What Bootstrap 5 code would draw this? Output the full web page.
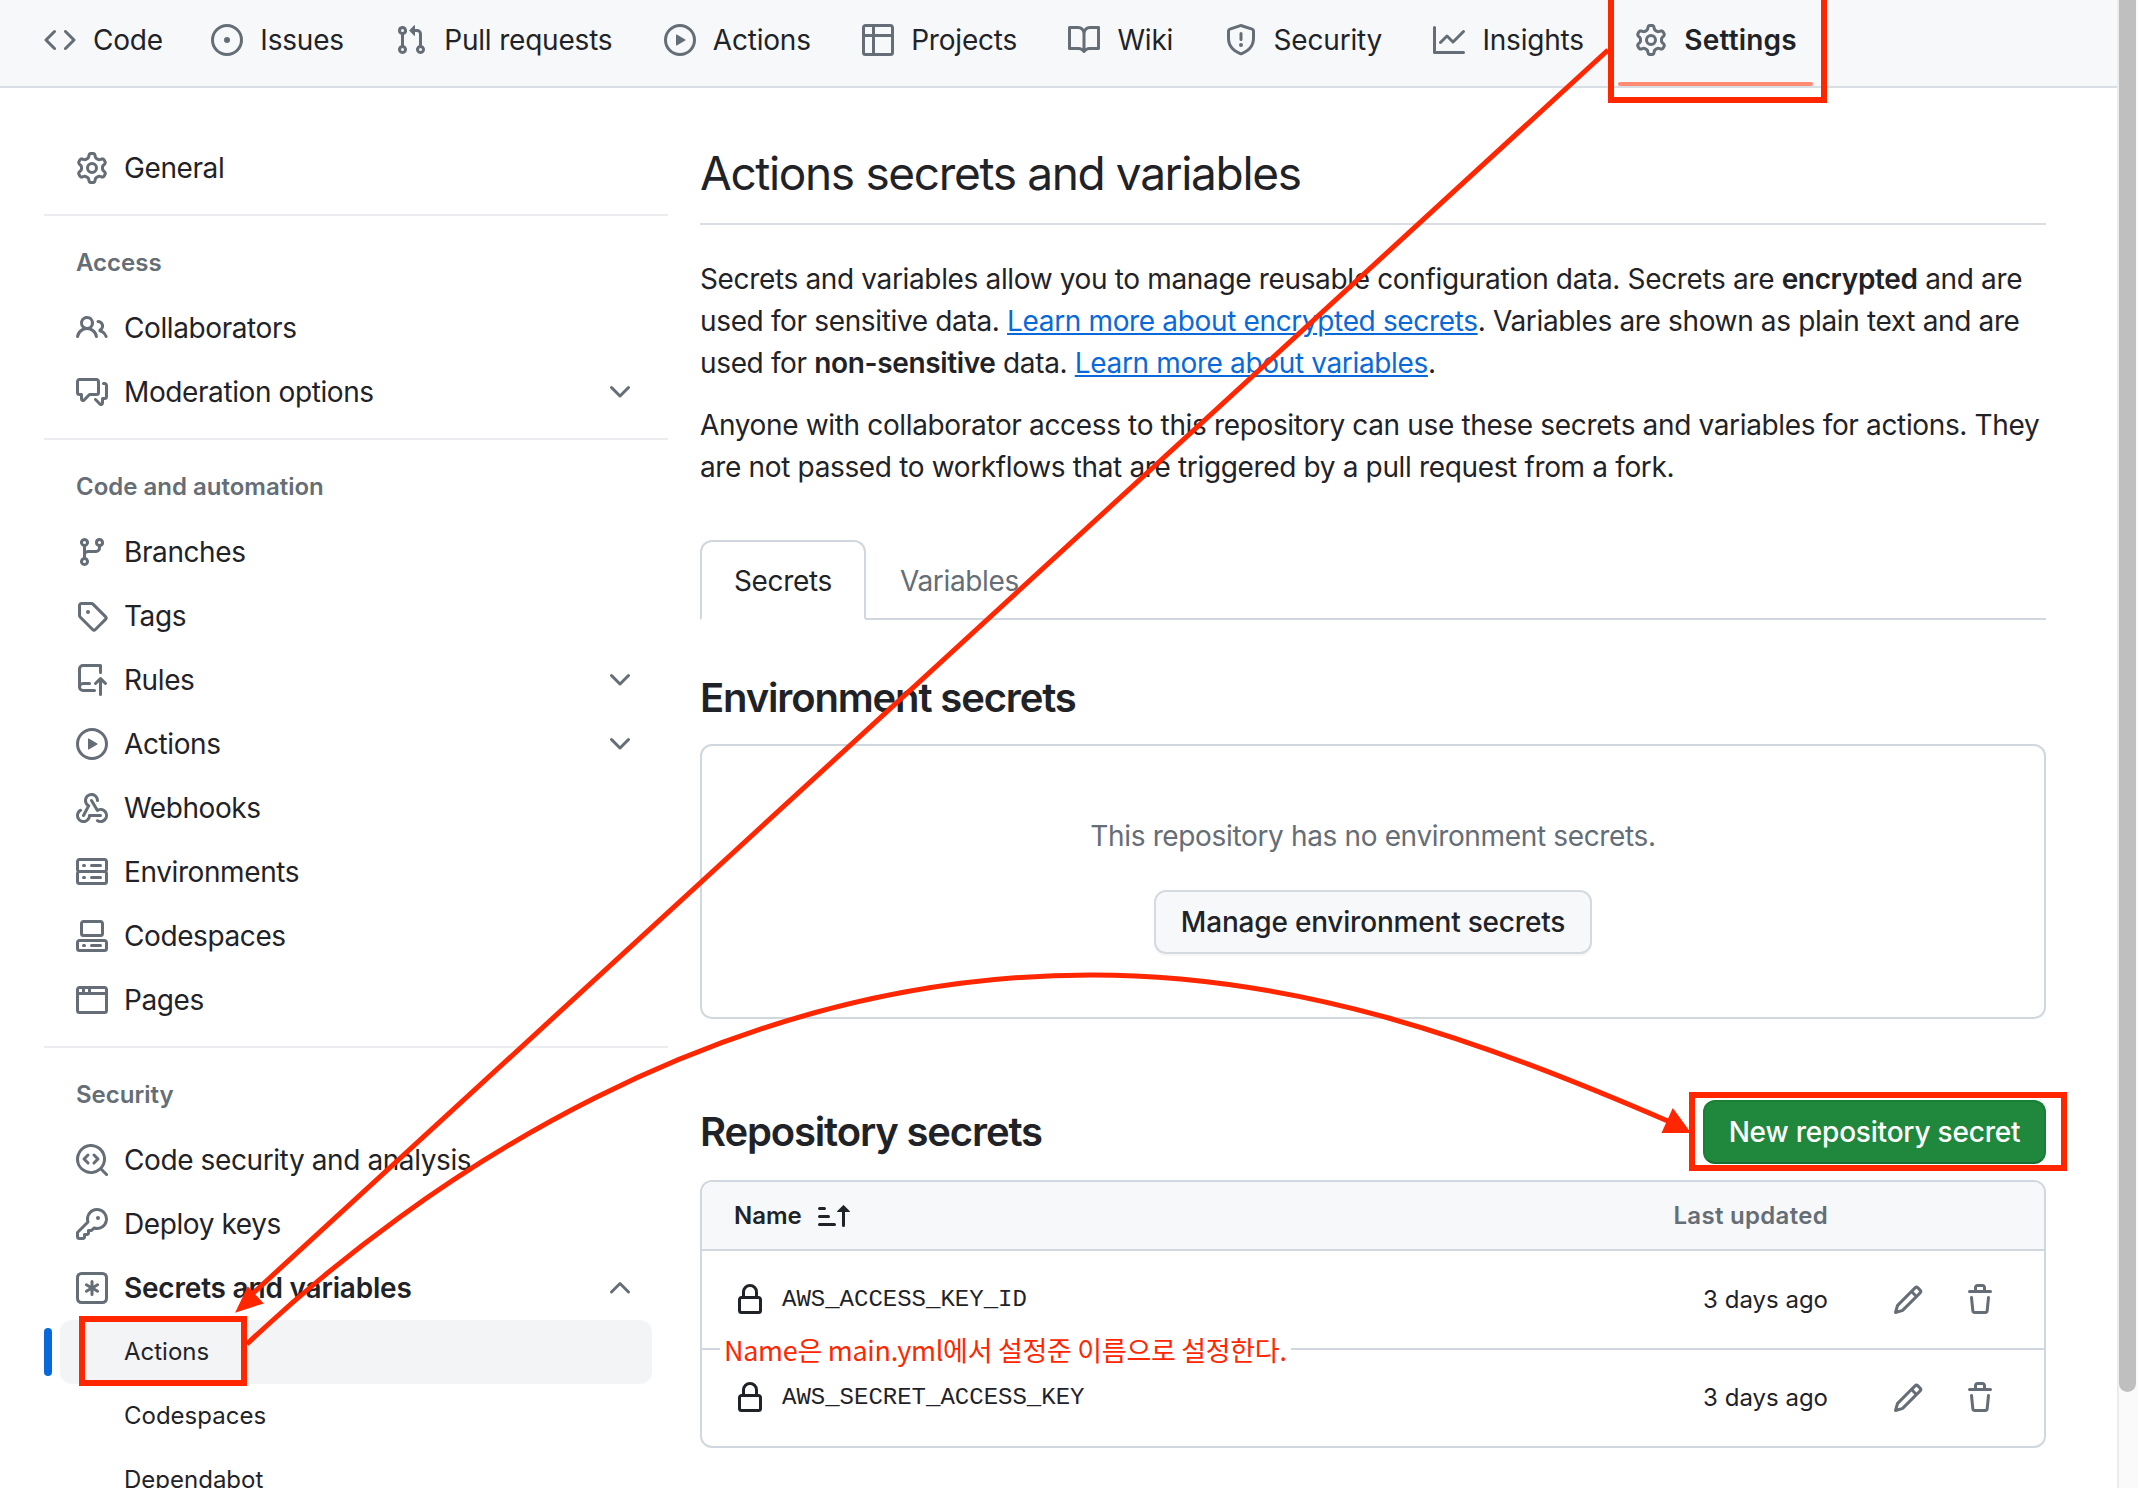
<!DOCTYPE html>
<html lang="en">
<head>
<meta charset="UTF-8">
<title>Actions secrets and variables</title>
<link href="https://cdn.jsdelivr.net/npm/bootstrap@5.3.0/dist/css/bootstrap.min.css" rel="stylesheet">
<style>
    html, body { height: 1488px; overflow: hidden; }
    body { font-family: Inter, "Liberation Sans", sans-serif; font-size: 28px; line-height: 42px; color: #1f2328; letter-spacing: -0.35px; position: relative; }
    .octi { fill: currentColor; flex-shrink: 0; }
    .page-wrap { width: 2117px; }
    .repo-nav { height: 88px; background: #f6f8fa; border-bottom: 2px solid #d8dee4; padding-left: 44px; gap: 51.4px; color: #656d76; letter-spacing: -0.2px; }
    .repo-tab { color: #1f2328; text-decoration: none; gap: 17px; height: 80px; position: relative; }
    .repo-tab:first-child { margin-right: -3px; }
    .repo-tab svg { color: #656d76; }
    .repo-tab.current { font-weight: 600; letter-spacing: 0.2px; }
    .repo-tab.current::after { content: ""; position: absolute; left: -17px; right: -16px; bottom: -6px; height: 4px; border-radius: 2px; background: #fd8c73; }
    .side-col { width: 624px; margin-left: 44px; padding-top: 48px; flex-shrink: 0; letter-spacing: -0.4px; }
    .side-row { height: 64px; margin: 0 16px; padding-left: 16px; padding-right: 16px; gap: 16px; color: #1f2328; text-decoration: none; position: relative; }
    .side-row svg { color: #656d76; }
    .side-row .chev { margin-left: auto; }
    .side-row.open { font-weight: 600; letter-spacing: -0.2px; }
    .side-sub { font-size: 24px; padding-left: 64px; letter-spacing: 0; }
    .side-sub.picked { background: #f3f4f6; border-radius: 12px; }
    .side-sub.picked::before { content: ""; position: absolute; left: -16px; top: 8px; width: 8px; height: 48px; border-radius: 4px; background: #0969da; }
    .side-line { margin: 14px 0 27px; height: 2px; background: #eaecef; }
    .side-label { font-size: 24px; font-weight: 600; line-height: 40px; color: #656d76; margin: 0 0 13px 32px; letter-spacing: 0; }
    .main-col { width: 1346px; margin-left: 32px; padding-top: 55px; }
    .page-title { font-size: 46px; font-weight: 400; line-height: 60px; margin: 0; padding-bottom: 20px; border-bottom: 2px solid #d8dee4; margin-bottom: 33px; letter-spacing: -1.35px; }
    .info-text { margin-bottom: 20px; white-space: nowrap; }
    .info-text a { color: #0969da; }
    .info-text b { font-weight: 600; }
    .secret-tabs { margin-top: 52px; border-bottom: 2px solid #d0d7de; height: 80px; }
    .secret-tabs .nav-link { height: 80px; padding: 18px 32px 0; font-size: 28px; line-height: 42px; color: #656d76; border: 2px solid transparent; border-radius: 12px 12px 0 0; margin-bottom: -2px; }
    .secret-tabs .nav-link.active { color: #1f2328; border-color: #d0d7de #d0d7de #fff; background: #fff; }
    .block-title { font-size: 40px; font-weight: 600; line-height: 60px; margin: 0; letter-spacing: -1.15px; }
    .empty-box { height: 275px; border: 2px solid #d0d7de; border-radius: 12px; padding-top: 69px; margin: 16px 0 81px; color: #656d76; }
    .ghost-btn { height: 64px; padding: 0 25px; margin-top: 33px; font-size: 28px; font-weight: 500; color: #1f2328; background: #f6f8fa; border: 2px solid #d5dae0; border-radius: 12px; box-shadow: 0 2px 0 rgba(31,35,40,.04); line-height: 58px; letter-spacing: -0.2px; }
    .green-btn { height: 64px; width: 343px; padding: 0; font-size: 28px; font-weight: 500; line-height: 60px; background: #1f883d; border: 2px solid #1a7f37; border-bottom-color: #186d30; border-radius: 12px; color: #fff; letter-spacing: -0.2px; }
    .secret-table { margin-top: 16px; height: 268px; border: 2px solid #d0d7de; border-radius: 12px; overflow: hidden; }
    .secret-head { height: 69px; background: #f6f8fa; border-bottom: 2px solid #d0d7de; font-size: 24px; padding: 0 0 0 32px; letter-spacing: 0; }
    .secret-head .name-col { font-weight: 600; gap: 16px; }
    .secret-head .when-col { margin-left: auto; padding-right: 216px; font-weight: 600; color: #656d76; letter-spacing: 0.3px; }
    .secret-row { height: 97px; padding-left: 32px; }
    .secret-row + .secret-row { border-top: 2px solid #d0d7de; }
    .secret-name { font-family: "Liberation Mono", monospace; font-size: 24px; letter-spacing: 0; margin-left: 16px; }
    .secret-when { margin-left: auto; font-size: 24px; letter-spacing: 0; margin-right: 64px; }
    .row-icons { color: #656d76; gap: 40px; margin-right: 48px; }
    .scroll-rail { position: absolute; right: 0; top: 0; width: 21px; height: 1488px; background: #fafafa; border-left: 2px solid #ececec; }
    .scroll-thumb { width: 17px; height: 1392px; background: #bfbfbf; border-radius: 0 0 9px 9px; }
    .mark-layer { position: absolute; left: 0; top: 0; pointer-events: none; }
    .mark-note { position: absolute; left: 720px; top: 1330px; padding: 0 4px; background: #fff; color: #ff2600; font-family: "Noto Sans CJK KR", sans-serif; font-size: 27px; line-height: 40px; letter-spacing: -0.3px; white-space: nowrap; }
</style>
</head>
<body>
<svg class="d-none">
    <symbol id="i-code" viewBox="0 0 16 16"><path d="m11.28 3.22 4.25 4.25a.75.75 0 0 1 0 1.06l-4.25 4.25a.749.749 0 0 1-1.275-.326.749.749 0 0 1 .215-.734L13.94 8l-3.72-3.72a.749.749 0 0 1 .326-1.275.749.749 0 0 1 .734.215Zm-6.56 0a.751.751 0 0 1 1.042.018.751.751 0 0 1 .018 1.042L2.06 8l3.72 3.72a.749.749 0 0 1-.326 1.275.749.749 0 0 1-.734-.215L.47 8.53a.75.75 0 0 1 0-1.06Z"/></symbol>
    <symbol id="i-issue" viewBox="0 0 16 16"><path d="M8 9.5a1.5 1.5 0 1 0 0-3 1.5 1.5 0 0 0 0 3Z"/><path d="M8 0a8 8 0 1 1 0 16A8 8 0 0 1 8 0ZM1.5 8a6.5 6.5 0 1 0 13 0 6.5 6.5 0 0 0-13 0Z"/></symbol>
    <symbol id="i-pull" viewBox="0 0 16 16"><path d="M1.5 3.25a2.25 2.25 0 1 1 3 2.122v5.256a2.251 2.251 0 1 1-1.5 0V5.372A2.25 2.25 0 0 1 1.5 3.25Zm5.677-.177L9.573.677A.25.25 0 0 1 10 .854V2.5h1A2.5 2.5 0 0 1 13.5 5v5.628a2.251 2.251 0 1 1-1.5 0V5a1 1 0 0 0-1-1h-1v1.646a.25.25 0 0 1-.427.177L7.177 3.427a.25.25 0 0 1 0-.354ZM3.75 2.5a.75.75 0 1 0 0 1.5.75.75 0 0 0 0-1.5Zm0 9.5a.75.75 0 1 0 0 1.5.75.75 0 0 0 0-1.5Zm8.25.75a.75.75 0 1 0 1.5 0 .75.75 0 0 0-1.5 0Z"/></symbol>
    <symbol id="i-play" viewBox="0 0 16 16"><path d="M8 0a8 8 0 1 1 0 16A8 8 0 0 1 8 0ZM1.5 8a6.5 6.5 0 1 0 13 0 6.5 6.5 0 0 0-13 0Zm4.879-2.773 4.264 2.559a.25.25 0 0 1 0 .428l-4.264 2.559A.25.25 0 0 1 6 10.559V5.442a.25.25 0 0 1 .379-.215Z"/></symbol>
    <symbol id="i-table" viewBox="0 0 16 16"><path d="M0 1.75C0 .784.784 0 1.75 0h12.5C15.216 0 16 .784 16 1.75v12.5A1.75 1.75 0 0 1 14.25 16H1.75A1.75 1.75 0 0 1 0 14.25ZM6.5 6.5v8h7.75a.25.25 0 0 0 .25-.25V6.5Zm8-1.5V1.75a.25.25 0 0 0-.25-.25H6.5V5Zm-13 1.5v7.75c0 .138.112.25.25.25H5v-8ZM5 5V1.5H1.75a.25.25 0 0 0-.25.25V5Z"/></symbol>
    <symbol id="i-book" viewBox="0 0 16 16"><path d="M0 1.75A.75.75 0 0 1 .75 1h4.253c1.227 0 2.317.59 3 1.501A3.743 3.743 0 0 1 11.006 1h4.245a.75.75 0 0 1 .75.75v10.5a.75.75 0 0 1-.75.75h-4.507a2.25 2.25 0 0 0-1.591.659l-.622.621a.75.75 0 0 1-1.06 0l-.622-.621A2.25 2.25 0 0 0 5.258 13H.75a.75.75 0 0 1-.75-.75Zm7.251 10.324.004-5.073-.002-2.253A2.25 2.25 0 0 0 5.003 2.5H1.5v9h3.757a3.75 3.75 0 0 1 1.994.574ZM8.755 4.75l-.004 7.322a3.752 3.752 0 0 1 1.992-.572H14.5v-9h-3.495a2.25 2.25 0 0 0-2.25 2.25Z"/></symbol>
    <symbol id="i-shield" viewBox="0 0 16 16"><path d="M7.467.133a1.748 1.748 0 0 1 1.066 0l5.25 1.68A1.75 1.75 0 0 1 15 3.48V7c0 1.566-.32 3.182-1.303 4.682-.983 1.498-2.585 2.813-5.032 3.855a1.697 1.697 0 0 1-1.33 0c-2.447-1.042-4.049-2.357-5.032-3.855C1.32 10.182 1 8.566 1 7V3.48a1.75 1.75 0 0 1 1.217-1.667Zm.61 1.429a.25.25 0 0 0-.153 0l-5.25 1.68a.25.25 0 0 0-.174.238V7c0 1.358.275 2.666 1.057 3.86.784 1.194 2.121 2.34 4.366 3.297a.196.196 0 0 0 .154 0c2.245-.956 3.582-2.104 4.366-3.298C13.225 9.666 13.5 8.36 13.5 7V3.48a.251.251 0 0 0-.174-.237l-5.25-1.68ZM8.75 4.75v3a.75.75 0 0 1-1.5 0v-3a.75.75 0 0 1 1.5 0ZM9 10.5a1 1 0 1 1-2 0 1 1 0 0 1 2 0Z"/></symbol>
    <symbol id="i-graph" viewBox="0 0 16 16"><path d="M1.5 1.75V13.5h13.75a.75.75 0 0 1 0 1.5H.75a.75.75 0 0 1-.75-.75V1.75a.75.75 0 0 1 1.5 0Zm14.28 2.53-5.25 5.25a.75.75 0 0 1-1.06 0L7 7.06 4.28 9.78a.751.751 0 0 1-1.042-.018.751.751 0 0 1-.018-1.042l3.25-3.25a.75.75 0 0 1 1.06 0L10 7.94l4.72-4.72a.751.751 0 0 1 1.042.018.751.751 0 0 1 .018 1.042Z"/></symbol>
    <symbol id="i-gear" viewBox="0 0 16 16"><path d="M8 0a8.2 8.2 0 0 1 .701.031C9.444.095 9.99.645 10.16 1.29l.288 1.107c.018.066.079.158.212.224.231.114.454.243.668.386.123.082.233.09.299.071l1.103-.303c.644-.176 1.392.021 1.82.63.27.385.506.792.704 1.218.315.675.111 1.422-.364 1.891l-.814.806c-.049.048-.098.147-.088.294.016.257.016.515 0 .772-.01.147.038.246.088.294l.814.806c.475.469.679 1.216.364 1.891a7.977 7.977 0 0 1-.704 1.217c-.428.61-1.176.807-1.82.63l-1.102-.302c-.067-.019-.177-.011-.3.071a5.909 5.909 0 0 1-.668.386c-.133.066-.194.158-.211.224l-.29 1.106c-.168.646-.715 1.196-1.458 1.26a8.006 8.006 0 0 1-1.402 0c-.743-.064-1.289-.614-1.458-1.26l-.289-1.106c-.018-.066-.079-.158-.212-.224a5.738 5.738 0 0 1-.668-.386c-.123-.082-.233-.09-.299-.071l-1.103.303c-.644.176-1.392-.021-1.82-.63a8.12 8.12 0 0 1-.704-1.218c-.315-.675-.111-1.422.363-1.891l.815-.806c.05-.048.098-.147.088-.294a6.214 6.214 0 0 1 0-.772c.01-.147-.038-.246-.088-.294l-.815-.806C.635 6.045.431 5.298.746 4.623a7.92 7.92 0 0 1 .704-1.217c.428-.61 1.176-.807 1.82-.63l1.102.302c.067.019.177.011.3-.071.214-.143.437-.272.668-.386.133-.066.194-.158.211-.224l.29-1.106C6.009.645 6.556.095 7.299.03 7.53.01 7.764 0 8 0Zm-.571 1.525c-.036.003-.108.036-.137.146l-.289 1.105c-.147.561-.549.967-.998 1.189-.173.086-.34.183-.5.29-.417.278-.97.423-1.529.27l-1.103-.303c-.109-.03-.175.016-.195.045-.22.312-.412.644-.573.99-.014.031-.021.11.059.19l.815.806c.411.406.562.957.53 1.456a4.709 4.709 0 0 0 0 .582c.032.499-.119 1.05-.53 1.456l-.815.806c-.081.08-.073.159-.059.19.162.346.353.677.573.989.02.03.085.076.195.046l1.102-.303c.56-.153 1.113-.008 1.53.27.161.107.328.204.501.29.447.222.85.629.997 1.189l.289 1.105c.029.109.101.143.137.146a6.6 6.6 0 0 0 1.142 0c.036-.003.108-.036.137-.146l.289-1.105c.147-.561.549-.967.998-1.189.173-.086.34-.183.5-.29.417-.278.97-.423 1.529-.27l1.103.303c.109.029.175-.016.195-.045.22-.313.411-.644.573-.99.014-.031.021-.11-.059-.19l-.815-.806c-.411-.406-.562-.957-.53-1.456a4.709 4.709 0 0 0 0-.582c-.032-.499.119-1.05.53-1.456l.815-.806c.081-.08.073-.159.059-.19a6.464 6.464 0 0 0-.573-.989c-.02-.03-.085-.076-.195-.046l-1.102.303c-.56.153-1.113.008-1.53-.27a4.44 4.44 0 0 0-.501-.29c-.447-.222-.85-.629-.997-1.189l-.289-1.105c-.029-.11-.101-.143-.137-.146a6.6 6.6 0 0 0-1.142 0ZM11 8a3 3 0 1 1-6 0 3 3 0 0 1 6 0ZM9.5 8a1.5 1.5 0 1 0-3.001.001A1.5 1.5 0 0 0 9.5 8Z"/></symbol>
    <symbol id="i-people" viewBox="0 0 16 16"><path d="M2 5.5a3.5 3.5 0 1 1 5.898 2.549 5.508 5.508 0 0 1 3.034 4.084.75.75 0 1 1-1.482.235 4 4 0 0 0-7.9 0 .75.75 0 0 1-1.482-.236A5.507 5.507 0 0 1 3.102 8.05 3.493 3.493 0 0 1 2 5.5ZM11 4a3.001 3.001 0 0 1 2.22 5.018 5.01 5.01 0 0 1 2.56 3.012.749.749 0 0 1-.885.954.752.752 0 0 1-.549-.514 3.507 3.507 0 0 0-2.522-2.372.75.75 0 0 1-.574-.73v-.352a.75.75 0 0 1 .416-.672A1.5 1.5 0 0 0 11 5.5.75.75 0 0 1 11 4Zm-5.5-.5a2 2 0 1 0-.001 3.999A2 2 0 0 0 5.5 3.5Z"/></symbol>
    <symbol id="i-comments" viewBox="0 0 16 16"><path d="M1.75 1h8.5c.966 0 1.75.784 1.75 1.75v5.5A1.75 1.75 0 0 1 10.25 10H7.061l-2.574 2.573A1.458 1.458 0 0 1 2 11.543V10h-.25A1.75 1.75 0 0 1 0 8.25v-5.5C0 1.784.784 1 1.75 1ZM1.5 2.75v5.5c0 .138.112.25.25.25h1a.75.75 0 0 1 .75.75v2.19l2.72-2.72a.749.749 0 0 1 .53-.22h3.5a.25.25 0 0 0 .25-.25v-5.5a.25.25 0 0 0-.25-.25h-8.5a.25.25 0 0 0-.25.25Zm13 2a.25.25 0 0 0-.25-.25h-.5a.75.75 0 0 1 0-1.5h.5c.966 0 1.75.784 1.75 1.75v5.5A1.75 1.75 0 0 1 14.25 12H14v1.543a1.458 1.458 0 0 1-2.487 1.03L9.22 12.28a.749.749 0 0 1 .326-1.275.749.749 0 0 1 .734.215l2.22 2.22v-2.19a.75.75 0 0 1 .75-.75h1a.25.25 0 0 0 .25-.25Z"/></symbol>
    <symbol id="i-branch" viewBox="0 0 16 16"><path d="M9.5 3.25a2.25 2.25 0 1 1 3 2.122V6A2.5 2.5 0 0 1 10 8.5H6a1 1 0 0 0-1 1v1.128a2.251 2.251 0 1 1-1.5 0V5.372a2.25 2.25 0 1 1 1.5 0v1.836A2.493 2.493 0 0 1 6 7h4a1 1 0 0 0 1-1v-.628A2.25 2.25 0 0 1 9.5 3.25Zm-6 0a.75.75 0 1 0 1.5 0 .75.75 0 0 0-1.5 0Zm8.25-.75a.75.75 0 1 0 0 1.5.75.75 0 0 0 0-1.5ZM4.25 12a.75.75 0 1 0 0 1.5.75.75 0 0 0 0-1.5Z"/></symbol>
    <symbol id="i-tag" viewBox="0 0 16 16"><path d="M1 7.775V2.75C1 1.784 1.784 1 2.75 1h5.025c.464 0 .91.184 1.238.513l6.25 6.25a1.75 1.75 0 0 1 0 2.474l-5.026 5.026a1.75 1.75 0 0 1-2.474 0l-6.25-6.25A1.75 1.75 0 0 1 1 7.775Zm1.5 0c0 .066.026.13.073.177l6.25 6.25a.25.25 0 0 0 .354 0l5.025-5.025a.25.25 0 0 0 0-.354l-6.25-6.25a.25.25 0 0 0-.177-.073H2.75a.25.25 0 0 0-.25.25ZM6 5a1 1 0 1 1 0 2 1 1 0 0 1 0-2Z"/></symbol>
    <symbol id="i-rules" viewBox="0 0 16 16"><path d="M1 2.5A2.5 2.5 0 0 1 3.5 0h8.75a.75.75 0 0 1 .75.75v3.5a.75.75 0 0 1-1.5 0V1.5h-8a1 1 0 0 0-1 1v6.708A2.493 2.493 0 0 1 3.5 9h3.25a.75.75 0 0 1 0 1.5H3.5a1 1 0 0 0 0 2h5.75a.75.75 0 0 1 0 1.5H3.5A2.5 2.5 0 0 1 1 11.5Zm13.23 7.79h-.001l-1.224-1.224v6.184a.75.75 0 0 1-1.5 0V9.066L10.28 10.29a.75.75 0 0 1-1.06-1.061l2.505-2.504a.75.75 0 0 1 1.06 0L15.29 9.23a.751.751 0 0 1-.018 1.042.751.751 0 0 1-1.042.018Z"/></symbol>
    <symbol id="i-webhook" viewBox="0 0 16 16"><path d="M5.5 4.25a2.25 2.25 0 0 1 4.5 0 .75.75 0 0 0 1.5 0 3.75 3.75 0 1 0-6.14 2.889l-2.272 4.258a.75.75 0 0 0 1.324.706L7 7.25a.75.75 0 0 0-.309-1.015A2.25 2.25 0 0 1 5.5 4.25Z"/><path d="M7.364 3.607a.75.75 0 0 1 1.03.257l2.608 4.349a3.75 3.75 0 1 1-.628 6.785.75.75 0 0 1 .752-1.299 2.25 2.25 0 1 0-.033-3.88.75.75 0 0 1-1.03-.256L7.107 4.636a.75.75 0 0 1 .257-1.03Z"/><path d="M2.9 8.776A.75.75 0 0 1 2.625 9.8 2.25 2.25 0 1 0 6 11.75a.75.75 0 0 1 .75-.751h5.5a.75.75 0 0 1 0 1.5H7.425a3.751 3.751 0 1 1-5.55-3.998.75.75 0 0 1 1.024.274Z"/></symbol>
    <symbol id="i-server" viewBox="0 0 16 16"><path d="M1.75 1h12.5c.966 0 1.75.784 1.75 1.75v4c0 .372-.116.717-.314 1 .198.283.314.628.314 1v4a1.75 1.75 0 0 1-1.75 1.75H1.75A1.75 1.75 0 0 1 0 12.75v-4c0-.358.109-.707.314-1a1.739 1.739 0 0 1-.314-1v-4C0 1.784.784 1 1.75 1ZM1.5 2.75v4c0 .138.112.25.25.25h12.5a.25.25 0 0 0 .25-.25v-4a.25.25 0 0 0-.25-.25H1.75a.25.25 0 0 0-.25.25Zm.25 5.75a.25.25 0 0 0-.25.25v4c0 .138.112.25.25.25h12.5a.25.25 0 0 0 .25-.25v-4a.25.25 0 0 0-.25-.25ZM7 4.75A.75.75 0 0 1 7.75 4h4.5a.75.75 0 0 1 0 1.5h-4.5A.75.75 0 0 1 7 4.75ZM7.75 10h4.5a.75.75 0 0 1 0 1.5h-4.5a.75.75 0 0 1 0-1.5ZM3 4.75a.75.75 0 0 1 .75-.75h.5a.75.75 0 0 1 0 1.5h-.5A.75.75 0 0 1 3 4.75ZM3.75 10h.5a.75.75 0 0 1 0 1.5h-.5a.75.75 0 0 1 0-1.5Z"/></symbol>
    <symbol id="i-spaces" viewBox="0 0 16 16"><path d="M0 11.25c0-.966.784-1.75 1.75-1.75h12.5c.966 0 1.75.784 1.75 1.75v3A1.75 1.75 0 0 1 14.25 16H1.75A1.75 1.75 0 0 1 0 14.25Zm2-9.5C2 .784 2.784 0 3.75 0h8.5C13.216 0 14 .784 14 1.75v5a1.75 1.75 0 0 1-1.75 1.75h-8.5A1.75 1.75 0 0 1 2 6.75Zm1.75-.25a.25.25 0 0 0-.25.25v5c0 .138.112.25.25.25h8.5a.25.25 0 0 0 .25-.25v-5a.25.25 0 0 0-.25-.25Zm-2 9.5a.25.25 0 0 0-.25.25v3c0 .138.112.25.25.25h12.5a.25.25 0 0 0 .25-.25v-3a.25.25 0 0 0-.25-.25Z"/><path d="M7 12.75a.75.75 0 0 1 .75-.75h4.5a.75.75 0 0 1 0 1.5h-4.5a.75.75 0 0 1-.75-.75Zm-4 0a.75.75 0 0 1 .75-.75h.5a.75.75 0 0 1 0 1.5h-.5a.75.75 0 0 1-.75-.75Z"/></symbol>
    <symbol id="i-browser" viewBox="0 0 16 16"><path d="M0 2.75C0 1.784.784 1 1.75 1h12.5c.966 0 1.75.784 1.75 1.75v10.5A1.75 1.75 0 0 1 14.25 15H1.75A1.75 1.75 0 0 1 0 13.25ZM14.5 5.5h-13v7.75c0 .138.112.25.25.25h12.5a.25.25 0 0 0 .25-.25Zm-13-1.5h1.5V2.5H1.75a.25.25 0 0 0-.25.25ZM4.5 4H6V2.5H4.5Zm3 0h7V2.75a.25.25 0 0 0-.25-.25H7.5Z"/></symbol>
    <symbol id="i-scan" viewBox="0 0 16 16"><path d="M8.47 4.97a.75.75 0 0 0 0 1.06L9.94 7.5 8.47 8.97a.75.75 0 1 0 1.06 1.06l2-2a.75.75 0 0 0 0-1.06l-2-2a.75.75 0 0 0-1.06 0ZM6.53 6.03a.75.75 0 0 0-1.06-1.06l-2 2a.75.75 0 0 0 0 1.06l2 2a.75.75 0 1 0 1.06-1.06L5.06 7.5l1.47-1.47Z"/><path d="M12.246 13.307a7.501 7.501 0 1 1 1.06-1.06l2.474 2.473a.749.749 0 0 1-.326 1.275.749.749 0 0 1-.734-.215ZM1.5 7.5a6.002 6.002 0 0 0 3.608 5.504 6.002 6.002 0 0 0 6.486-1.117.748.748 0 0 1 .292-.293A6 6 0 1 0 1.5 7.5Z"/></symbol>
    <symbol id="i-key" viewBox="0 0 16 16"><path d="M10.5 0a5.499 5.499 0 1 1-1.288 10.848l-.932.932a.749.749 0 0 1-.53.22H7v.75a.749.749 0 0 1-.22.53l-.5.5a.749.749 0 0 1-.53.22H5v.75a.749.749 0 0 1-.22.53l-.5.5a.749.749 0 0 1-.53.22h-2A1.75 1.75 0 0 1 0 14.25v-2c0-.199.079-.389.22-.53l4.932-4.932A5.5 5.5 0 0 1 10.5 0Zm-4 5.5c-.001.431.069.86.205 1.269a.75.75 0 0 1-.181.768L1.5 12.56v1.69c0 .138.112.25.25.25h1.69l.06-.06v-1.19a.75.75 0 0 1 .75-.75h1.19l.06-.06v-1.19a.75.75 0 0 1 .75-.75h1.19l1.023-1.025a.75.75 0 0 1 .768-.18A4 4 0 1 0 6.5 5.5ZM11 6a1 1 0 1 1 0-2 1 1 0 0 1 0 2Z"/></symbol>
    <symbol id="i-asterisk" viewBox="0 0 16 16"><path d="M0 2.75A2.75 2.75 0 0 1 2.75 0h10.5A2.75 2.75 0 0 1 16 2.75v10.5A2.75 2.75 0 0 1 13.25 16H2.75A2.75 2.75 0 0 1 0 13.25ZM2.75 1.5c-.69 0-1.25.56-1.25 1.25v10.5c0 .69.56 1.25 1.25 1.25h10.5c.69 0 1.25-.56 1.25-1.25V2.75c0-.69-.56-1.25-1.25-1.25Z"/><path d="M8 4a.75.75 0 0 1 .75.75V6.7l1.69-.975a.75.75 0 0 1 .75 1.3L9.5 8l1.69.976a.75.75 0 0 1-.75 1.298L8.75 9.3v1.951a.75.75 0 0 1-1.5 0V9.299l-1.69.976a.75.75 0 0 1-.75-1.3L6.5 8l-1.69-.975a.75.75 0 0 1 .75-1.3l1.69.976V4.75A.75.75 0 0 1 8 4Z"/></symbol>
    <symbol id="i-down" viewBox="0 0 16 16"><path d="M12.78 5.22a.749.749 0 0 1 0 1.06l-4.25 4.25a.749.749 0 0 1-1.06 0L3.22 6.28a.749.749 0 1 1 1.06-1.06L8 8.939l3.72-3.719a.749.749 0 0 1 1.06 0Z"/></symbol>
    <symbol id="i-up" viewBox="0 0 16 16"><path d="M3.22 10.53a.749.749 0 0 1 0-1.06l4.25-4.25a.749.749 0 0 1 1.06 0l4.25 4.25a.749.749 0 1 1-1.06 1.06L8 6.811 4.28 10.53a.749.749 0 0 1-1.06 0Z"/></symbol>
    <symbol id="i-lock" viewBox="0 0 16 16"><path d="M4 4a4 4 0 0 1 8 0v2h.25c.966 0 1.75.784 1.75 1.75v5.5A1.75 1.75 0 0 1 12.25 15h-8.5A1.75 1.75 0 0 1 2 13.25v-5.5C2 6.784 2.784 6 3.75 6H4Zm8.25 3.5h-8.5a.25.25 0 0 0-.25.25v5.5c0 .138.112.25.25.25h8.5a.25.25 0 0 0 .25-.25v-5.5a.25.25 0 0 0-.25-.25ZM10.5 6V4a2.5 2.5 0 1 0-5 0v2Z"/></symbol>
    <symbol id="i-pencil" viewBox="0 0 16 16"><path d="M11.013 1.427a1.75 1.75 0 0 1 2.474 0l1.086 1.086a1.75 1.75 0 0 1 0 2.474l-8.61 8.61c-.21.21-.47.364-.756.445l-3.251.93a.75.75 0 0 1-.927-.928l.929-3.25c.081-.286.235-.547.445-.758l8.61-8.61Zm.176 4.823L9.75 4.81l-6.286 6.287a.253.253 0 0 0-.064.108l-.558 1.953 1.953-.558a.253.253 0 0 0 .108-.064Zm1.238-3.763a.25.25 0 0 0-.354 0L10.811 3.75l1.439 1.44 1.263-1.263a.25.25 0 0 0 0-.354Z"/></symbol>
    <symbol id="i-trash" viewBox="0 0 16 16"><path d="M11 1.75V3h2.25a.75.75 0 0 1 0 1.5H2.75a.75.75 0 0 1 0-1.5H5V1.75C5 .784 5.784 0 6.75 0h2.5C10.216 0 11 .784 11 1.75ZM4.496 6.675l.66 6.6a.25.25 0 0 0 .249.225h5.19a.25.25 0 0 0 .249-.225l.66-6.6a.75.75 0 0 1 1.492.149l-.66 6.6A1.748 1.748 0 0 1 10.595 15h-5.19a1.75 1.75 0 0 1-1.741-1.575l-.66-6.6a.75.75 0 1 1 1.492-.15ZM6.5 1.75V3h3V1.75a.25.25 0 0 0-.25-.25h-2.5a.25.25 0 0 0-.25.25Z"/></symbol>
    <symbol id="i-sort" viewBox="0 0 16 16"><path d="m12.927 2.573 3 3A.25.25 0 0 1 15.75 6H13.5v6.75a.75.75 0 0 1-1.5 0V6H9.75a.25.25 0 0 1-.177-.427l3-3a.25.25 0 0 1 .354 0ZM0 12.25a.75.75 0 0 1 .75-.75h7.5a.75.75 0 0 1 0 1.5H.75a.75.75 0 0 1-.75-.75Zm0-4a.75.75 0 0 1 .75-.75h4.5a.75.75 0 0 1 0 1.5H.75A.75.75 0 0 1 0 8.25Zm0-4a.75.75 0 0 1 .75-.75h2.5a.75.75 0 0 1 0 1.5H.75A.75.75 0 0 1 0 4.25Z"/></symbol>
</svg>

<div class="page-wrap">
    <nav class="nav repo-nav align-items-start flex-nowrap">
        <a class="repo-tab d-flex align-items-center" href="#"><svg class="octi" width="32" height="32"><use href="#i-code"/></svg>Code</a>
        <a class="repo-tab d-flex align-items-center" href="#"><svg class="octi" width="32" height="32"><use href="#i-issue"/></svg>Issues</a>
        <a class="repo-tab d-flex align-items-center" href="#"><svg class="octi" width="32" height="32"><use href="#i-pull"/></svg>Pull requests</a>
        <a class="repo-tab d-flex align-items-center" href="#"><svg class="octi" width="32" height="32"><use href="#i-play"/></svg>Actions</a>
        <a class="repo-tab d-flex align-items-center" href="#"><svg class="octi" width="32" height="32"><use href="#i-table"/></svg>Projects</a>
        <a class="repo-tab d-flex align-items-center" href="#"><svg class="octi" width="32" height="32"><use href="#i-book"/></svg>Wiki</a>
        <a class="repo-tab d-flex align-items-center" href="#"><svg class="octi" width="32" height="32"><use href="#i-shield"/></svg>Security</a>
        <a class="repo-tab d-flex align-items-center" href="#"><svg class="octi" width="32" height="32"><use href="#i-graph"/></svg>Insights</a>
        <a class="repo-tab current d-flex align-items-center" href="#"><svg class="octi" width="32" height="32"><use href="#i-gear"/></svg>Settings</a>
    </nav>

    <div class="d-flex">
        <aside class="side-col">
            <a class="side-row d-flex align-items-center" href="#"><svg class="octi" width="32" height="32"><use href="#i-gear"/></svg>General</a>
            <div class="side-line"></div>
            <div class="side-label">Access</div>
            <a class="side-row d-flex align-items-center" href="#"><svg class="octi" width="32" height="32"><use href="#i-people"/></svg>Collaborators</a>
            <a class="side-row d-flex align-items-center" href="#"><svg class="octi" width="32" height="32"><use href="#i-comments"/></svg>Moderation options<svg class="octi chev" width="32" height="32"><use href="#i-down"/></svg></a>
            <div class="side-line"></div>
            <div class="side-label">Code and automation</div>
            <a class="side-row d-flex align-items-center" href="#"><svg class="octi" width="32" height="32"><use href="#i-branch"/></svg>Branches</a>
            <a class="side-row d-flex align-items-center" href="#"><svg class="octi" width="32" height="32"><use href="#i-tag"/></svg>Tags</a>
            <a class="side-row d-flex align-items-center" href="#"><svg class="octi" width="32" height="32"><use href="#i-rules"/></svg>Rules<svg class="octi chev" width="32" height="32"><use href="#i-down"/></svg></a>
            <a class="side-row d-flex align-items-center" href="#"><svg class="octi" width="32" height="32"><use href="#i-play"/></svg>Actions<svg class="octi chev" width="32" height="32"><use href="#i-down"/></svg></a>
            <a class="side-row d-flex align-items-center" href="#"><svg class="octi" width="32" height="32"><use href="#i-webhook"/></svg>Webhooks</a>
            <a class="side-row d-flex align-items-center" href="#"><svg class="octi" width="32" height="32"><use href="#i-server"/></svg>Environments</a>
            <a class="side-row d-flex align-items-center" href="#"><svg class="octi" width="32" height="32"><use href="#i-spaces"/></svg>Codespaces</a>
            <a class="side-row d-flex align-items-center" href="#"><svg class="octi" width="32" height="32"><use href="#i-browser"/></svg>Pages</a>
            <div class="side-line"></div>
            <div class="side-label">Security</div>
            <a class="side-row d-flex align-items-center" href="#"><svg class="octi" width="32" height="32"><use href="#i-scan"/></svg>Code security and analysis</a>
            <a class="side-row d-flex align-items-center" href="#"><svg class="octi" width="32" height="32"><use href="#i-key"/></svg>Deploy keys</a>
            <a class="side-row open d-flex align-items-center" href="#"><svg class="octi" width="32" height="32"><use href="#i-asterisk"/></svg>Secrets and variables<svg class="octi chev" width="32" height="32"><use href="#i-up"/></svg></a>
            <a class="side-row side-sub picked d-flex align-items-center" href="#">Actions</a>
            <a class="side-row side-sub d-flex align-items-center" href="#">Codespaces</a>
            <a class="side-row side-sub d-flex align-items-center" href="#">Dependabot</a>
        </aside>

        <main class="main-col">
            <h1 class="page-title">Actions secrets and variables</h1>
            <p class="info-text">Secrets and variables allow you to manage reusable configuration data. Secrets are <b>encrypted</b> and are<br>used for sensitive data. <a href="#">Learn more about encrypted secrets</a>. Variables are shown as plain text and are<br>used for <b>non-sensitive</b> data. <a href="#">Learn more about variables</a>.</p>
            <p class="info-text mb-0">Anyone with collaborator access to this repository can use these secrets and variables for actions. They<br>are not passed to workflows that are triggered by a pull request from a fork.</p>

            <ul class="nav nav-tabs secret-tabs">
                <li class="nav-item"><a class="nav-link active" href="#">Secrets</a></li>
                <li class="nav-item"><a class="nav-link" href="#">Variables</a></li>
            </ul>

            <h2 class="block-title mt-5">Environment secrets</h2>
            <div class="empty-box text-center">
                <div>This repository has no environment secrets.</div>
                <button class="btn ghost-btn" type="button">Manage environment secrets</button>
            </div>

            <div class="d-flex align-items-center justify-content-between">
                <h2 class="block-title">Repository secrets</h2>
                <button class="btn green-btn" type="button">New repository secret</button>
            </div>
            <div class="secret-table">
                <div class="secret-head d-flex align-items-center">
                    <div class="name-col d-flex align-items-center">Name<svg class="octi" width="32" height="32"><use href="#i-sort"/></svg></div>
                    <div class="when-col">Last updated</div>
                </div>
                <div class="secret-row d-flex align-items-center">
                    <svg class="octi" width="32" height="32"><use href="#i-lock"/></svg>
                    <span class="secret-name">AWS_ACCESS_KEY_ID</span>
                    <span class="secret-when">3 days ago</span>
                    <div class="row-icons d-flex"><svg class="octi" width="32" height="32"><use href="#i-pencil"/></svg><svg class="octi" width="32" height="32"><use href="#i-trash"/></svg></div>
                </div>
                <div class="secret-row d-flex align-items-center">
                    <svg class="octi" width="32" height="32"><use href="#i-lock"/></svg>
                    <span class="secret-name">AWS_SECRET_ACCESS_KEY</span>
                    <span class="secret-when">3 days ago</span>
                    <div class="row-icons d-flex"><svg class="octi" width="32" height="32"><use href="#i-pencil"/></svg><svg class="octi" width="32" height="32"><use href="#i-trash"/></svg></div>
                </div>
            </div>
        </main>
    </div>
</div>

<div class="scroll-rail"><div class="scroll-thumb"></div></div>

<!-- hand-drawn red annotations on top of the screenshot -->
<svg class="mark-layer" width="2138" height="1488" fill="none" stroke="#ff2600">
    <rect x="1611" y="-3" width="213" height="103" stroke-width="6"/>
    <rect x="82" y="1319" width="162" height="64" stroke-width="6"/>
    <rect x="1692" y="1095" width="372" height="73" stroke-width="6"/>
    <path d="M1608 50 L250 1296" stroke-width="5"/>
    <path d="M237 1311 L262 1303 L248 1288 Z" fill="#ff2600" stroke-width="2"/>
    <path d="M247 1344 C420 1180 720 975 1091 975 C1300 975 1480 1040 1670 1122" stroke-width="5"/>
    <path d="M1689 1132 L1663 1132 L1673 1110 Z" fill="#ff2600" stroke-width="2"/>
</svg>
<div class="mark-note">Name은 main.yml에서 설정준 이름으로 설정한다.</div>

<script src="https://cdn.jsdelivr.net/npm/bootstrap@5.3.0/dist/js/bootstrap.bundle.min.js"></script>
</body>
</html>
